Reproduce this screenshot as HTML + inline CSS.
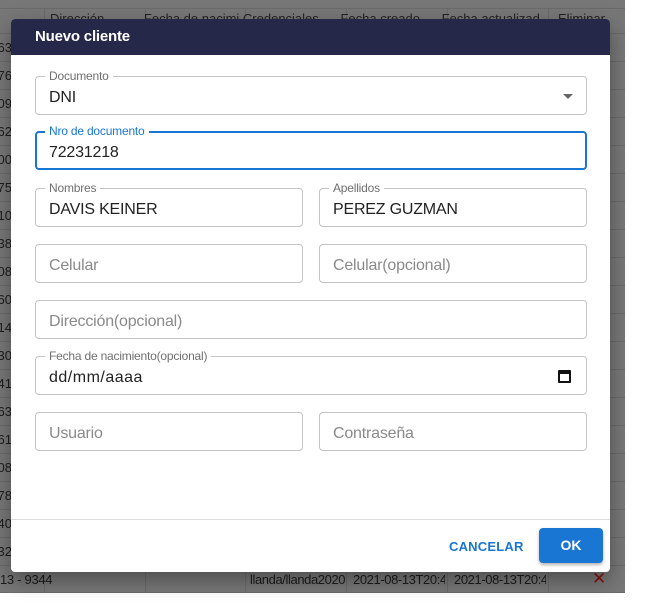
<!DOCTYPE html>
<html><head><meta charset="utf-8"><style>
*{box-sizing:border-box;margin:0;padding:0}
body{width:658px;height:612px;background:#fff;font-family:"Liberation Sans",Roboto,sans-serif;position:relative;overflow:hidden}
.bg{position:absolute;left:0;top:0;width:625px;height:593px;background:#777;overflow:hidden}
.hl{position:absolute;left:0;width:625px;height:1px;background:#6a6a6a}
.vl{position:absolute;top:8px;width:1px;height:585px;background:#6a6a6a}
.num{position:absolute;left:0;font-size:13px;color:#1c1c1c;width:12px;overflow:hidden;direction:rtl}
.dlg{position:absolute;left:11px;top:19px;width:599px;height:553px;background:#fff;border-radius:4px;box-shadow:0 8px 20px rgba(0,0,0,.35);overflow:hidden}
.hd{height:36px;background:#252849;color:#fff;font-weight:bold;font-size:15px;padding:9px 24px;letter-spacing:-.2px}
.f{position:absolute;border:1px solid #c4c4c4;border-radius:4px;height:39px}
.f .lb{position:absolute;top:-8px;left:9px;background:#fff;padding:0 4px;font-size:12px;color:#6f6f6f;line-height:14px;letter-spacing:-.2px}
.f .v{position:absolute;left:13px;top:12px;font-size:16px;color:#222;letter-spacing:-.2px}
.f .p{position:absolute;left:13px;top:12px;font-size:16px;color:#8a8a8a;letter-spacing:-.2px}
.foc{border:2px solid #1976d2}
.foc .lb{color:#1976d2;left:8px;top:-9px}
.foc .v{left:12px;top:11px}
</style></head><body>
<div class="bg">
<div class="hl" style="top:8px"></div>
<div class="hl" style="top:33px"></div><div class="hl" style="top:61px"></div><div class="hl" style="top:89px"></div><div class="hl" style="top:117px"></div><div class="hl" style="top:145px"></div><div class="hl" style="top:173px"></div><div class="hl" style="top:201px"></div><div class="hl" style="top:229px"></div><div class="hl" style="top:257px"></div><div class="hl" style="top:285px"></div><div class="hl" style="top:313px"></div><div class="hl" style="top:341px"></div><div class="hl" style="top:369px"></div><div class="hl" style="top:397px"></div><div class="hl" style="top:425px"></div><div class="hl" style="top:453px"></div><div class="hl" style="top:481px"></div><div class="hl" style="top:509px"></div><div class="hl" style="top:537px"></div><div class="hl" style="top:565px"></div><div class="hl" style="top:592px"></div>
<div class="vl" style="left:44px"></div><div class="vl" style="left:145px"></div><div class="vl" style="left:245px"></div><div class="vl" style="left:346px"></div><div class="vl" style="left:447px"></div><div class="vl" style="left:548px"></div>
<div style="position:absolute;top:11px;left:50px;font-size:13px;color:#222;white-space:nowrap">Dirección&nbsp;&nbsp;&nbsp;&nbsp;&nbsp;&nbsp;&nbsp;&nbsp;&nbsp;&nbsp;&nbsp;Fecha de nacimi&nbsp;Credenciales&nbsp;&nbsp;&nbsp;&nbsp;&nbsp;&nbsp;Fecha creado&nbsp;&nbsp;&nbsp;&nbsp;&nbsp;&nbsp;Fecha actualizad&nbsp;&nbsp;&nbsp;&nbsp;&nbsp;Eliminar</div>
<div class="num" style="top:40px">63</div><div class="num" style="top:68px">76</div><div class="num" style="top:96px">09</div><div class="num" style="top:124px">62</div><div class="num" style="top:152px">00</div><div class="num" style="top:180px">75</div><div class="num" style="top:208px">10</div><div class="num" style="top:236px">38</div><div class="num" style="top:264px">08</div><div class="num" style="top:292px">60</div><div class="num" style="top:320px">14</div><div class="num" style="top:348px">30</div><div class="num" style="top:376px">41</div><div class="num" style="top:404px">63</div><div class="num" style="top:432px">61</div><div class="num" style="top:460px">08</div><div class="num" style="top:488px">78</div><div class="num" style="top:516px">40</div><div class="num" style="top:544px">32</div>
<div style="position:absolute;top:572px;left:0;font-size:13px;color:#1c1c1c;white-space:nowrap;letter-spacing:-.3px">13 - 9344</div>
<div style="position:absolute;top:572px;left:250px;font-size:13px;color:#1c1c1c;white-space:nowrap;width:95px;overflow:hidden;letter-spacing:-.4px">llanda/llanda2020</div>
<div style="position:absolute;top:572px;left:353px;font-size:13px;color:#1c1c1c;white-space:nowrap;width:92px;overflow:hidden;letter-spacing:-.4px">2021-08-13T20:49</div>
<div style="position:absolute;top:572px;left:454px;font-size:13px;color:#1c1c1c;white-space:nowrap;width:92px;overflow:hidden;letter-spacing:-.4px">2021-08-13T20:49</div>
<div style="position:absolute;top:569px;left:592px;font-size:17px;color:#8b1010">✕</div>
</div>
<div class="dlg">
<div class="hd">Nuevo cliente</div>
<div style="position:absolute;left:0;top:500px;width:599px;height:1px;background:#ddd"></div>
<div class="f" style="left:24px;top:57px;width:552px"><span class="lb">Documento</span><span class="v">DNI</span>
<div style="position:absolute;right:13px;top:17px;border-left:5px solid transparent;border-right:5px solid transparent;border-top:5px solid #666"></div></div>
<div class="f foc" style="left:24px;top:112px;width:552px"><span class="lb">Nro de documento</span><span class="v">72231218</span></div>
<div class="f" style="left:24px;top:169px;width:268px"><span class="lb">Nombres</span><span class="v">DAVIS KEINER</span></div>
<div class="f" style="left:308px;top:169px;width:268px"><span class="lb">Apellidos</span><span class="v">PEREZ GUZMAN</span></div>
<div class="f" style="left:24px;top:225px;width:268px"><span class="p">Celular</span></div>
<div class="f" style="left:308px;top:225px;width:268px"><span class="p">Celular(opcional)</span></div>
<div class="f" style="left:24px;top:281px;width:552px"><span class="p">Dirección(opcional)</span></div>
<div class="f" style="left:24px;top:337px;width:552px"><span class="lb">Fecha de nacimiento(opcional)</span><span class="v" style="letter-spacing:.5px">dd/mm/aaaa</span>
<div style="position:absolute;left:522px;top:13px;width:13px;height:13px;border:2px solid #111;border-top-width:4px;border-radius:1px"></div></div>
<div class="f" style="left:24px;top:393px;width:268px"><span class="p">Usuario</span></div>
<div class="f" style="left:308px;top:393px;width:268px"><span class="p">Contraseña</span></div>
<div style="position:absolute;left:438px;top:520px;font-size:13px;font-weight:bold;color:#1976d2;letter-spacing:.2px">CANCELAR</div>
<div style="position:absolute;left:528px;top:509px;width:64px;height:35px;background:#1976d2;border-radius:4px;color:#fff;font-weight:bold;font-size:14px;text-align:center;line-height:35px;box-shadow:0 2px 3px rgba(0,0,0,.3)">OK</div>
</div>
</body></html>
